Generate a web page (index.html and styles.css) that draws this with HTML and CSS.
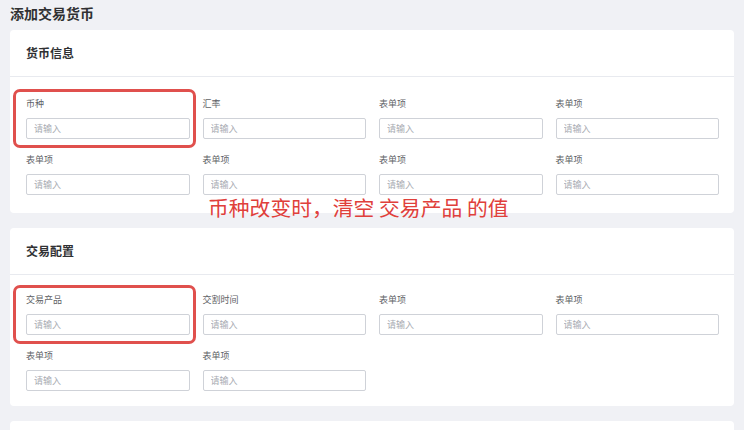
FILE: index.html
```html
<!DOCTYPE html>
<html lang="zh-CN">
<head>
  <meta charset="UTF-8">
  <title>添加交易货币</title>
  <link rel="stylesheet" href="styles.css">
</head>
<body>
  <div class="page">
    <h1 class="page-title">添加交易货币</h1>

    <div class="card">
      <div class="card-header">货币信息</div>
      <div class="card-body">
        <div class="form-grid">
          <div class="field marked">
            <label>币种</label>
            <input type="text" placeholder="请输入">
          </div>
          <div class="field">
            <label>汇率</label>
            <input type="text" placeholder="请输入">
          </div>
          <div class="field">
            <label>表单项</label>
            <input type="text" placeholder="请输入">
          </div>
          <div class="field">
            <label>表单项</label>
            <input type="text" placeholder="请输入">
          </div>
          <div class="field">
            <label>表单项</label>
            <input type="text" placeholder="请输入">
          </div>
          <div class="field">
            <label>表单项</label>
            <input type="text" placeholder="请输入">
          </div>
          <div class="field">
            <label>表单项</label>
            <input type="text" placeholder="请输入">
          </div>
          <div class="field">
            <label>表单项</label>
            <input type="text" placeholder="请输入">
          </div>
        </div>
      </div>
      <div class="note">币种改变时，清空 交易产品 的值</div>
    </div>

    <div class="card">
      <div class="card-header">交易配置</div>
      <div class="card-body second">
        <div class="form-grid">
          <div class="field marked">
            <label>交易产品</label>
            <input type="text" placeholder="请输入">
          </div>
          <div class="field">
            <label>交割时间</label>
            <input type="text" placeholder="请输入">
          </div>
          <div class="field">
            <label>表单项</label>
            <input type="text" placeholder="请输入">
          </div>
          <div class="field">
            <label>表单项</label>
            <input type="text" placeholder="请输入">
          </div>
          <div class="field">
            <label>表单项</label>
            <input type="text" placeholder="请输入">
          </div>
          <div class="field">
            <label>表单项</label>
            <input type="text" placeholder="请输入">
          </div>
        </div>
      </div>
    </div>

    <!-- next section, only its top edge is visible -->
    <div class="card empty"></div>
  </div>
</body>
</html>
```

FILE: styles.css
```css
body {
  margin: 0;
  background-color: #f0f1f5;
  font-family: "Noto Sans CJK SC", "Noto Sans", sans-serif;
  color: #303133;
}

.page {
  padding: 0 10px;
}

.page-title {
  margin: 0;
  font-size: 14px;
  font-weight: bold;
  line-height: 26px;
  height: 30px;
  color: #303133;
}

.card {
  position: relative;
  background-color: #fff;
  border-radius: 4px;
  margin-bottom: 15px;
}

.card.empty {
  height: 46px;
}

.card-header {
  height: 46px;
  line-height: 46px;
  padding-left: 16px;
  font-size: 12px;
  font-weight: bold;
  border-bottom: 1px solid #e8eaef;
}

.card-body {
  padding: 20px 15px 18px 16px;
}

.card-body.second {
  padding-top: 18px;
  padding-bottom: 15px;
}

.form-grid {
  display: grid;
  grid-template-columns: repeat(4, 1fr);
  column-gap: 13px;
  row-gap: 14px;
}

.field {
  position: relative;
}

.field label {
  display: block;
  font-size: 9px;
  line-height: 14px;
  margin-bottom: 7px;
  color: #606266;
}

.field input {
  display: block;
  box-sizing: border-box;
  width: 100%;
  height: 21px;
  padding: 0 7px;
  border: 1px solid #cfd2d8;
  border-radius: 2px;
  font-family: inherit;
  font-size: 9px;
  color: #303133;
  background: #fff;
}

.field input::placeholder {
  color: #a8abb2;
}

.marked::after {
  content: "";
  position: absolute;
  left: -13px;
  top: -8px;
  right: -6px;
  bottom: -9px;
  border: 3px solid #e0504d;
  border-radius: 7px;
}

.note {
  position: absolute;
  left: 198px;
  top: 165px;
  font-size: 20.8px;
  line-height: 24px;
  color: #e0403b;
  white-space: nowrap;
}
```
